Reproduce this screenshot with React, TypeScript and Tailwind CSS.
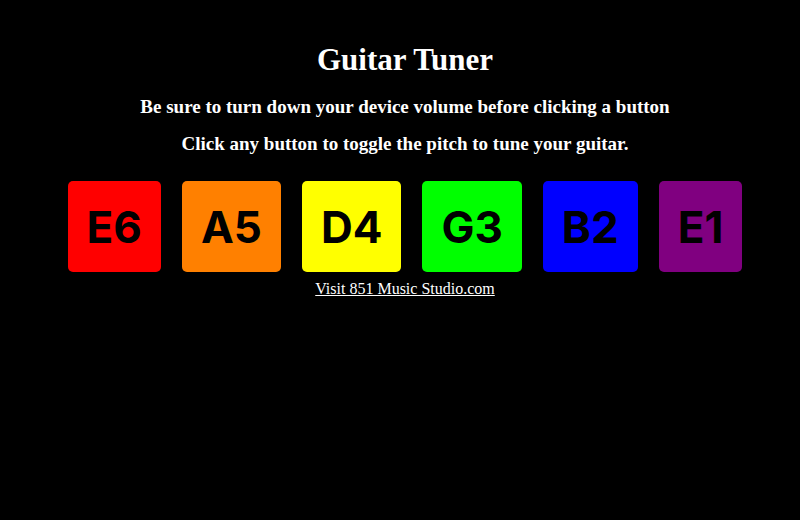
const strings = [
  { note: "E6", color: "bg-[#ff0000]" },
  { note: "A5", color: "bg-[#ff8000]" },
  { note: "D4", color: "bg-[#ffff00]" },
  { note: "G3", color: "bg-[#00ff00]" },
  { note: "B2", color: "bg-[#0000ff]" },
  { note: "E1", color: "bg-[#800080]" },
];

export default function App() {
  return (
    <main className="flex min-h-screen flex-col items-center bg-black pt-10 pl-[10px] text-center font-['Palatino','Liberation_Serif',serif] text-white">
      <h1 className="text-[31px] leading-10 font-bold">Guitar Tuner</h1>
      <h2 className="mt-[15px] text-[19px] leading-6 font-bold">
        Be sure to turn down your device volume before clicking a button
      </h2>
      <h2 className="mt-[13px] text-[19px] leading-6 font-bold">
        Click any button to toggle the pitch to tune your guitar.
      </h2>

      <div className="mt-[25px] flex flex-wrap justify-center gap-[21px]">
        {strings.map(({ note, color }) => (
          <button
            key={note}
            type="button"
            className={`rounded-[5px] px-[19px] pt-[19px] pb-[17px] font-['Inter',sans-serif] text-[44px] leading-[55px] font-bold text-black ${color}`}
          >
            {note}
          </button>
        ))}
      </div>

      <a href="https://851musicstudio.com" className="mt-[5px] text-base underline">
        Visit 851 Music Studio.com
      </a>
    </main>
  );
}
